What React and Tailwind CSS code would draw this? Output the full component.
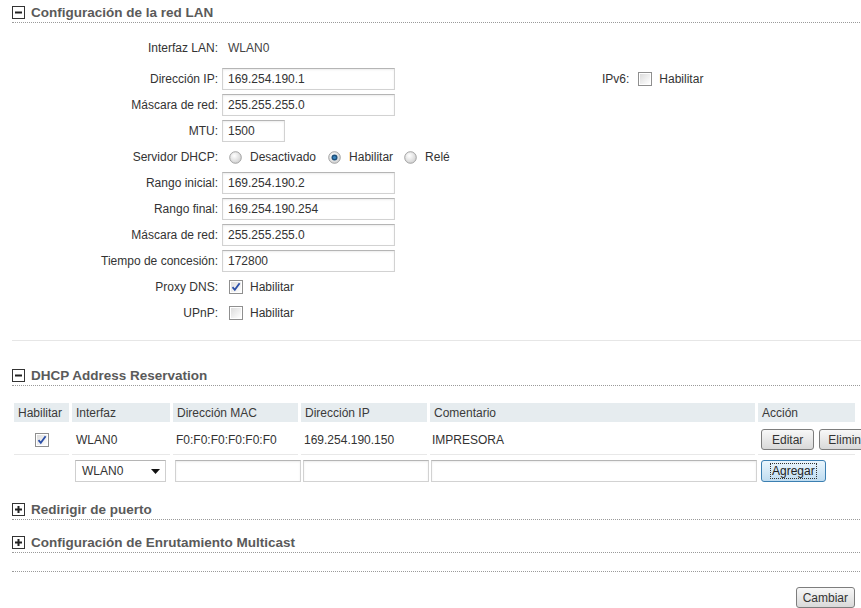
import React from "react";

const font = { fontFamily: '"Liberation Sans", Arial, sans-serif' };

function BoxIcon({ plus }) {
  return (
    <svg width="13" height="13" viewBox="0 0 13 13" className="shrink-0">
      <rect x="0.5" y="0.5" width="12" height="12" fill="#fff" stroke="#333" />
      <rect x="3" y="5.5" width="7" height="2" fill="#222" />
      {plus && <rect x="5.5" y="3" width="2" height="7" fill="#222" />}
    </svg>
  );
}

function SectionHeader({ title, plus, className = "" }) {
  return (
    <div className={"flex items-center gap-[6px] h-[20px] border-b border-dotted border-[#9a9a9a] " + className}>
      <BoxIcon plus={plus} />
      <span className="text-[13.5px] font-bold text-[#5a5a5a] leading-none">{title}</span>
    </div>
  );
}

function Check({ checked }) {
  return (
    <svg width="14" height="14" viewBox="0 0 14 14" className="shrink-0">
      <defs>
        <linearGradient id="cbg" x1="0" y1="0" x2="1" y2="1">
          <stop offset="0" stopColor="#dcdcdc" />
          <stop offset="1" stopColor="#ffffff" />
        </linearGradient>
      </defs>
      <rect x="0.5" y="0.5" width="13" height="13" fill="#fff" stroke="#8f8f8f" />
      <rect x="2" y="2" width="10" height="10" fill="url(#cbg)" />
      {checked && (
        <path d="M3.5 7.2 L5.8 9.8 L10.6 3.2" fill="none" stroke="#2b4fa8" strokeWidth="1.8" />
      )}
    </svg>
  );
}

function Radio({ checked }) {
  return (
    <svg width="13" height="13" viewBox="0 0 13 13" className="shrink-0">
      <defs>
        <radialGradient id="rg" cx="0.4" cy="0.35" r="0.7">
          <stop offset="0" stopColor="#ffffff" />
          <stop offset="1" stopColor="#cfcfcf" />
        </radialGradient>
      </defs>
      <circle cx="6.5" cy="6.5" r="5.8" fill="url(#rg)" stroke="#9a9a9a" strokeWidth="0.9" />
      {checked && (
        <>
          <circle cx="6.5" cy="6.5" r="3" fill="#1d4f7a" />
          <circle cx="6.5" cy="6.5" r="1.6" fill="#3a86c0" />
        </>
      )}
    </svg>
  );
}

function Input({ value, w = "w-[173px]" }) {
  return (
    <div
      className={
        w +
        " h-[22px] flex items-center pl-[5px] border border-[#d2d2d2] border-t-[#b5b5b5] bg-white shadow-[inset_0_1px_2px_rgba(0,0,0,0.08)] text-[12px] text-[#333]"
      }
    >
      {value}
    </div>
  );
}

function Row({ label, children }) {
  return (
    <div className="flex items-center h-[26px]">
      <div className="w-[210px] text-right text-[12px] text-[#333] pr-[4px] whitespace-nowrap">{label}</div>
      <div className="flex items-center">{children}</div>
    </div>
  );
}

function Btn({ children, className = "" }) {
  return (
    <div
      className={
        "h-[21px] flex items-center rounded-[3px] border border-[#7d7d7d] bg-gradient-to-b from-[#f8f8f8] to-[#d9d9d9] text-[12px] text-[#333] whitespace-nowrap " +
        className
      }
    >
      {children}
    </div>
  );
}

const cols = "grid grid-cols-[55px_98px_125px_126px_325px_97px] gap-x-[3px]";

export default function App() {
  return (
    <div className="w-[861px] h-[608px] overflow-hidden bg-white" style={font}>
      <div className="w-[900px] pl-[12px]">
        <SectionHeader title="Configuración de la red LAN" className="mt-[3px]" />

        <div className="flex mt-[12px]">
          <div className="w-[590px]">
            <div className="flex items-center h-[26px] mb-[5px]">
              <div className="w-[210px] text-right text-[12px] text-[#333] pr-[4px]">Interfaz LAN:</div>
              <div className="pl-[6px] text-[12px] text-[#444]">WLAN0</div>
            </div>
            <Row label="Dirección IP:">
              <Input value="169.254.190.1" />
            </Row>
            <Row label="Máscara de red:">
              <Input value="255.255.255.0" />
            </Row>
            <Row label="MTU:">
              <Input value="1500" w="w-[63px]" />
            </Row>
            <Row label="Servidor DHCP:">
              <div className="flex items-center text-[12px] text-[#333] pl-[7px]">
                <Radio />
                <span className="ml-[8px]">Desactivado</span>
                <span className="ml-[12px]"><Radio checked /></span>
                <span className="ml-[8px]">Habilitar</span>
                <span className="ml-[11px]"><Radio /></span>
                <span className="ml-[8px]">Relé</span>
              </div>
            </Row>
            <Row label="Rango inicial:">
              <Input value="169.254.190.2" />
            </Row>
            <Row label="Rango final:">
              <Input value="169.254.190.254" />
            </Row>
            <Row label="Máscara de red:">
              <Input value="255.255.255.0" />
            </Row>
            <Row label="Tiempo de concesión:">
              <Input value="172800" />
            </Row>
            <Row label="Proxy DNS:">
              <div className="flex items-center pl-[7px] gap-[7px] text-[12px] text-[#333]">
                <Check checked />
                <span>Habilitar</span>
              </div>
            </Row>
            <Row label="UPnP:">
              <div className="flex items-center pl-[7px] gap-[7px] text-[12px] text-[#333]">
                <Check />
                <span>Habilitar</span>
              </div>
            </Row>
          </div>
          <div className="pt-[31px]">
            <div className="flex items-center h-[26px] text-[12px] text-[#333]">
              <span>IPv6:</span>
              <span className="ml-[9px]"><Check /></span>
              <span className="ml-[7px]">Habilitar</span>
            </div>
          </div>
        </div>

        <div className="mt-[14px] border-t border-[#e6e6e6]" />

        <SectionHeader title="DHCP Address Reservation" className="mt-[25px]" />

        <div className="mt-[17px] pl-[2px] text-[12px] text-[#333]">
          <div className={cols}>
            {["Habilitar", "Interfaz", "Dirección MAC", "Dirección IP", "Comentario", "Acción"].map((h) => (
              <div key={h} className="h-[19px] bg-[#e6ecef] flex items-center px-[4px] text-[#3a3a3a]">
                {h}
              </div>
            ))}
          </div>
          <div className={cols + " mt-[3px]"}>
            <div className="h-[30px] border-b border-[#e8e8e8] flex items-center justify-center">
              <Check checked />
            </div>
            <div className="h-[30px] border-b border-[#e8e8e8] flex items-center px-[4px]">WLAN0</div>
            <div className="h-[30px] border-b border-[#e8e8e8] flex items-center px-[3px]">F0:F0:F0:F0:F0:F0</div>
            <div className="h-[30px] border-b border-[#e8e8e8] flex items-center px-[3px]">169.254.190.150</div>
            <div className="h-[30px] border-b border-[#e8e8e8] flex items-center px-[2px]">IMPRESORA</div>
            <div className="h-[30px] border-b border-[#e8e8e8] flex items-center gap-[5px] px-[3px] overflow-visible">
              <Btn className="px-[10px]">Editar</Btn>
              <Btn className="px-[8px]">Eliminar</Btn>
            </div>
          </div>
          <div className={cols + " mt-[5px]"}>
            <div />
            <div className="flex items-center pl-[3px]">
              <div className="w-[91px] h-[22px] border border-[#cfcfcf] border-t-[#b5b5b5] flex items-center justify-between pl-[6px] pr-[5px] text-[#333]">
                <span>WLAN0</span>
                <svg width="9" height="5" viewBox="0 0 9 5">
                  <path d="M0 0 L9 0 L4.5 5 Z" fill="#111" />
                </svg>
              </div>
            </div>
            <div className="pl-[2px]">
              <Input value="" w="w-[126px]" />
            </div>
            <div className="pl-[2px]">
              <Input value="" w="w-[126px]" />
            </div>
            <div className="pl-[1px]">
              <Input value="" w="w-[326px]" />
            </div>
            <div className="flex items-center px-[3px]">
              <div className="h-[22px] flex items-center px-[9px] rounded-[3px] border border-[#3c7fb1] bg-gradient-to-b from-[#eaf6fd] to-[#bfdcf0] text-[12px] text-[#222]">
                <span className="outline outline-1 outline-dotted outline-[#333] px-[1px] leading-[14px]">Agregar</span>
              </div>
            </div>
          </div>
        </div>

        <SectionHeader title="Redirigir de puerto" plus className="mt-[18px]" />
        <SectionHeader title="Configuración de Enrutamiento Multicast" plus className="mt-[13px]" />
        <div className="mt-[18px] border-t border-dotted border-[#9a9a9a]" />
      </div>
      <div className="w-[855px] flex justify-end mt-[15px]">
        <Btn className="px-[6px]">Cambiar</Btn>
      </div>
    </div>
  );
}
